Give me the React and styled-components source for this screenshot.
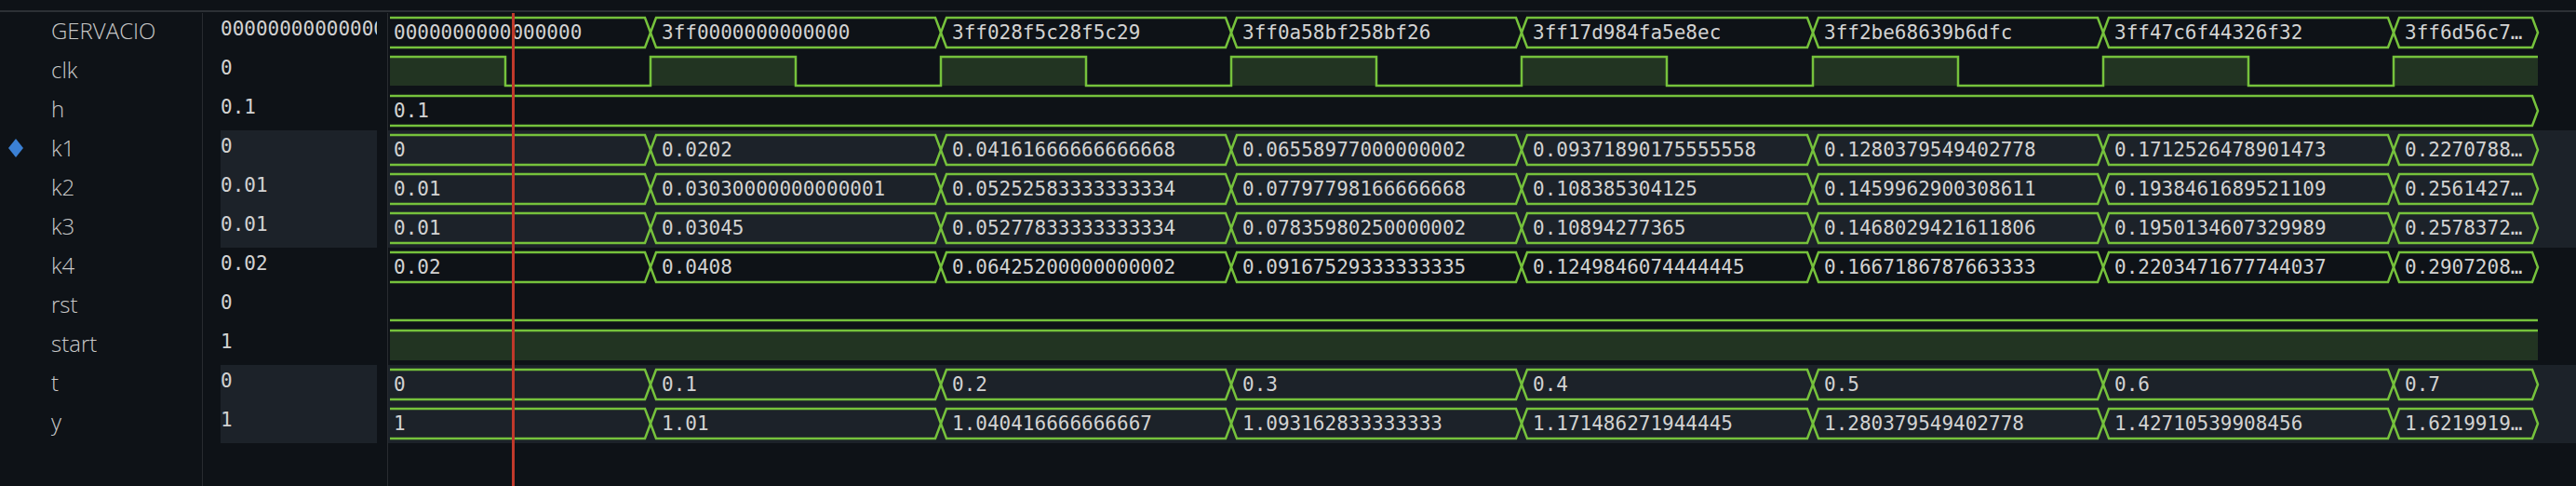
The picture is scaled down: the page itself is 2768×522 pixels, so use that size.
import React from 'react';
import styled, { createGlobalStyle } from 'styled-components';

const EDGES = [388, 700, 1012, 1324, 1636, 1949, 2261, 2573, 2728];
const WAVE_START = 420;
const WAVE_END = 2728;
const TOP = 5;
const MID = 21;
const BOT = 37;

const signals = [
  {
    name: 'GERVACIO',
    value: '0000000000000000',
    kind: 'bus',
    labels: [
      '0000000000000000',
      '3ff0000000000000',
      '3ff028f5c28f5c29',
      '3ff0a58bf258bf26',
      '3ff17d984fa5e8ec',
      '3ff2be68639b6dfc',
      '3ff47c6f44326f32',
      '3ff6d56c7…',
    ],
  },
  { name: 'clk', value: '0', kind: 'clock' },
  { name: 'h', value: '0.1', kind: 'bus', labels: ['0.1'], edges: [388, 2728] },
  {
    name: 'k1',
    value: '0',
    kind: 'bus',
    hl: true,
    marked: true,
    labels: [
      '0',
      '0.0202',
      '0.04161666666666668',
      '0.06558977000000002',
      '0.09371890175555558',
      '0.1280379549402778',
      '0.1712526478901473',
      '0.2270788…',
    ],
  },
  {
    name: 'k2',
    value: '0.01',
    kind: 'bus',
    hl: true,
    labels: [
      '0.01',
      '0.03030000000000001',
      '0.05252583333333334',
      '0.07797798166666668',
      '0.108385304125',
      '0.1459962900308611',
      '0.1938461689521109',
      '0.2561427…',
    ],
  },
  {
    name: 'k3',
    value: '0.01',
    kind: 'bus',
    hl: true,
    labels: [
      '0.01',
      '0.03045',
      '0.05277833333333334',
      '0.07835980250000002',
      '0.10894277365',
      '0.1468029421611806',
      '0.1950134607329989',
      '0.2578372…',
    ],
  },
  {
    name: 'k4',
    value: '0.02',
    kind: 'bus',
    labels: [
      '0.02',
      '0.0408',
      '0.06425200000000002',
      '0.09167529333333335',
      '0.1249846074444445',
      '0.1667186787663333',
      '0.2203471677744037',
      '0.2907208…',
    ],
  },
  { name: 'rst', value: '0', kind: 'low' },
  { name: 'start', value: '1', kind: 'high' },
  {
    name: 't',
    value: '0',
    kind: 'bus',
    hl: true,
    labels: ['0', '0.1', '0.2', '0.3', '0.4', '0.5', '0.6', '0.7'],
  },
  {
    name: 'y',
    value: '1',
    kind: 'bus',
    hl: true,
    labels: [
      '1',
      '1.01',
      '1.040416666666667',
      '1.093162833333333',
      '1.171486271944445',
      '1.280379549402778',
      '1.42710539908456',
      '1.6219919…',
    ],
  },
];

const GlobalStyle = createGlobalStyle`
  html, body {
    margin: 0;
    padding: 0;
    background: #0e1217;
    overflow: hidden;
  }
`;

const Screen = styled.div`
  width: 2768px;
  height: 522px;
  background: #0e1217;
  display: flex;
  flex-direction: column;
`;

const TopBar = styled.div`
  height: 11px;
  flex: none;
  border-bottom: 2px solid #2c3035;
`;

const Panels = styled.div`
  position: relative;
  flex: 1;
  display: flex;
  padding-top: 1px;
`;

const NamesPanel = styled.div`
  width: 217px;
  flex: none;
  border-right: 1px solid #282b30;
`;

const NameRow = styled.div`
  height: 42px;
  display: flex;
  align-items: flex-start;
  font-family: 'Open Sans', 'Noto Sans', sans-serif;
  font-weight: 300;
  font-size: 24px;
  line-height: 38px;
  color: #c9c9c9;
`;

const Marker = styled.div`
  width: 55px;
  height: 38px;
  flex: none;
  display: flex;
  align-items: center;
  padding-left: 9px;
  box-sizing: border-box;
`;

const ValuesPanel = styled.div`
  width: 199px;
  flex: none;
  border-right: 1px solid #282b30;
  padding-left: 19px;
  padding-right: 11px;
  box-sizing: border-box;
`;

const ValueCell = styled.div`
  height: 42px;
  background: ${({ $hl }) => ($hl ? '#1c2229' : 'transparent')};
  font-family: 'DejaVu Sans Mono', 'Liberation Mono', monospace;
  font-size: 21px;
  line-height: 35px;
  color: #d2d2d2;
  white-space: nowrap;
  overflow: hidden;
`;

const WavePanel = styled.div`
  flex: 1;
  min-width: 0;
`;

const WaveRow = styled.div`
  height: 42px;
  padding-left: 2px;
  background: ${({ $hl }) => ($hl ? '#1c2229' : 'transparent')};
`;

const WaveSvg = styled.svg`
  display: block;
  overflow: hidden;
`;

const Trace = styled.path`
  fill: none;
  stroke: #76c23c;
  stroke-width: 2.5;
  stroke-linejoin: miter;
`;

const HighFill = styled.rect`
  fill: #223422;
`;

const Label = styled.text`
  font-family: 'DejaVu Sans Mono', 'Liberation Mono', monospace;
  font-size: 21px;
  fill: #d2d2d2;
`;

const Cursor = styled.div`
  position: absolute;
  top: 1px;
  bottom: 0;
  left: 550px;
  width: 3px;
  background: #c0392b;
`;

const Diamond = () => (
  <svg width="16" height="20" viewBox="0 0 16 20">
    <path d="M8 0 L16 10 L8 20 L0 10 Z" fill="#3b80d4" />
  </svg>
);

const segPath = (a, b) =>
  `M${a},${MID} L${a + 6},${TOP} L${b - 6},${TOP} L${b},${MID} L${b - 6},${BOT} L${a + 6},${BOT} Z`;

const BusWave = ({ labels, edges = EDGES }) => (
  <>
    {labels.map((label, i) => {
      const a = edges[i];
      const b = edges[i + 1];
      return (
        <g key={i}>
          <Trace d={segPath(a, b)} />
          <Label x={Math.max(a + 12, WAVE_START + 4)} y={28}>
            {label}
          </Label>
        </g>
      );
    })}
  </>
);

const ClockWave = () => {
  const highs = [[WAVE_START, 544]];
  for (let k = 0; k < 7; k++) {
    const rise = EDGES[k + 1];
    highs.push([rise, Math.min(rise + 156, WAVE_END)]);
  }
  const lo = 36;
  let d = `M${WAVE_START},${TOP}`;
  highs.forEach(([r, f], i) => {
    if (i > 0) d += ` H${r} V${TOP}`;
    d += ` H${f}`;
    if (f < WAVE_END) d += ` V${lo}`;
  });
  return (
    <>
      {highs.map(([r, f], i) => (
        <HighFill key={i} x={r} y={TOP} width={f - r} height={lo - TOP} />
      ))}
      <Trace d={d} />
    </>
  );
};

const LevelWave = ({ high }) =>
  high ? (
    <>
      <HighFill x={WAVE_START} y={TOP} width={WAVE_END - WAVE_START} height={BOT - TOP} />
      <Trace d={`M${WAVE_START},${TOP} H${WAVE_END}`} />
    </>
  ) : (
    <Trace d={`M${WAVE_START},36 H${WAVE_END}`} />
  );

const Wave = ({ sig }) => {
  const width = 2768 - WAVE_START;
  return (
    <WaveSvg width={width} height="42" viewBox={`${WAVE_START} 0 ${width} 42`}>
      {sig.kind === 'bus' && <BusWave labels={sig.labels} edges={sig.edges} />}
      {sig.kind === 'clock' && <ClockWave />}
      {sig.kind === 'low' && <LevelWave />}
      {sig.kind === 'high' && <LevelWave high />}
    </WaveSvg>
  );
};

export default function App() {
  return (
    <Screen>
      <GlobalStyle />
      <TopBar />
      <Panels>
        <NamesPanel>
          {signals.map((s) => (
            <NameRow key={s.name}>
              <Marker>{s.marked && <Diamond />}</Marker>
              {s.name}
            </NameRow>
          ))}
        </NamesPanel>
        <ValuesPanel>
          {signals.map((s) => (
            <ValueCell key={s.name} $hl={s.hl}>
              {s.value}
            </ValueCell>
          ))}
        </ValuesPanel>
        <WavePanel>
          {signals.map((s) => (
            <WaveRow key={s.name} $hl={s.hl}>
              <Wave sig={s} />
            </WaveRow>
          ))}
        </WavePanel>
        <Cursor />
      </Panels>
    </Screen>
  );
}
